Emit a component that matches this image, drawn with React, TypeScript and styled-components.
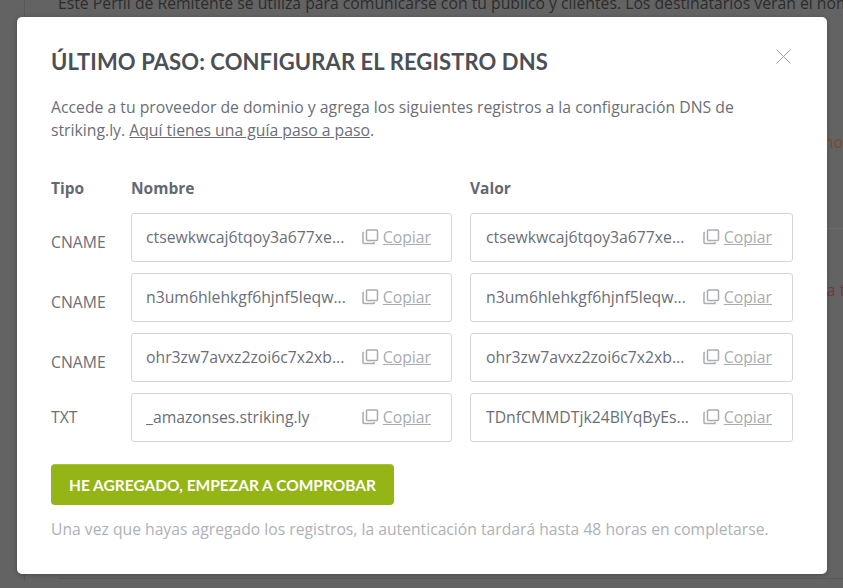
import styled, { createGlobalStyle } from "styled-components";

const GlobalStyle = createGlobalStyle`
  html, body {
    margin: 0;
    padding: 0;
    background: #636363;
  }
  * {
    box-sizing: border-box;
  }
`;

const records = [
  { type: "CNAME", name: "ctsewkwcaj6tqoy3a677xe...", value: "ctsewkwcaj6tqoy3a677xe..." },
  { type: "CNAME", name: "n3um6hlehkgf6hjnf5leqw...", value: "n3um6hlehkgf6hjnf5leqw..." },
  { type: "CNAME", name: "ohr3zw7avxz2zoi6c7x2xb...", value: "ohr3zw7avxz2zoi6c7x2xb..." },
  { type: "TXT", name: "_amazonses.striking.ly", value: "TDnfCMMDTjk24BlYqByEs..." },
];

const CopyIcon = () => (
  <svg width="17" height="16" viewBox="0 0 17 16" fill="none" stroke="#a9acb0">
    <rect x="4.5" y="1" width="11" height="10.5" rx="1" strokeWidth="1.5" />
    <path d="M2 3.5 H1.5 Q1 3.5 1 4 V13.5 Q1 14.5 2 14.5 H12 V13" strokeWidth="1.5" />
  </svg>
);

const CloseIcon = () => (
  <svg width="15" height="15" viewBox="0 0 15 15" fill="none" stroke="#9b9fa4" strokeWidth="1">
    <path d="M0.5 0.5 L14.5 14.5 M14.5 0.5 L0.5 14.5" />
  </svg>
);

const App = () => {
  return (
    <>
      <GlobalStyle />
      <Page>
        <Content>
          <Intro>
            Este Perfil de Remitente se utiliza para comunicarse con tu público y clientes. Los
            destinatarios verán el nombre
          </Intro>
          <OrangeNote>notificación</OrangeNote>
          <Divider />
          <RedNote>para todos</RedNote>
          <BottomDivider />
        </Content>
      </Page>
      <Modal>
        <Header>
          <Title>Último paso: Configurar el registro DNS</Title>
          <CloseButton>
            <CloseIcon />
          </CloseButton>
        </Header>
        <Description>
          Accede a tu proveedor de dominio y agrega los siguientes registros a la configuración DNS
          de striking.ly. <GuideLink>Aquí tienes una guía paso a paso</GuideLink>.
        </Description>
        <HeadRow>
          <TypeHead>Tipo</TypeHead>
          <ColumnHead $width={321}>Nombre</ColumnHead>
          <ColumnHead $width={323}>Valor</ColumnHead>
        </HeadRow>
        <Rows>
          {records.map((record) => (
            <Row key={record.name}>
              <TypeCell $low={record.type === "CNAME"}>{record.type}</TypeCell>
              <Field $width={321} $inset={14}>
                <FieldText>{record.name}</FieldText>
                <CopyIcon />
                <CopyLink>Copiar</CopyLink>
              </Field>
              <Field $width={323} $inset={15}>
                <FieldText>{record.value}</FieldText>
                <CopyIcon />
                <CopyLink>Copiar</CopyLink>
              </Field>
            </Row>
          ))}
        </Rows>
        <Submit>He agregado, empezar a comprobar</Submit>
        <Hint>
          Una vez que hayas agregado los registros, la autenticación tardará hasta 48 horas en
          completarse.
        </Hint>
      </Modal>
    </>
  );
};

export default App;

const Page = styled.div`
  height: 100vh;
  overflow: hidden;
  padding-left: 24px;
  background: #636363;
`;

const Content = styled.div`
  height: 100%;
  border-left: 1px solid #575757;
  padding-left: 33px;
  font-family: "Open Sans", sans-serif;
  font-size: 15.75px;
  line-height: 20px;
`;

const Intro = styled.div`
  margin-top: -7px;
  color: #2c2c2c;
  white-space: nowrap;
`;

const OrangeNote = styled.div`
  margin-top: 119px;
  margin-left: 766px;
  color: #7d4a26;
  white-space: nowrap;
`;

const Divider = styled.div`
  margin-top: 76px;
  height: 1px;
  background: #6d6d6d;
`;

const RedNote = styled.div`
  margin-top: 51px;
  margin-left: 744px;
  color: #723a3e;
  white-space: nowrap;
`;

const BottomDivider = styled.div`
  margin-top: 278px;
  height: 1px;
  background: #585858;
`;

const Modal = styled.div`
  position: absolute;
  top: 17px;
  left: 17px;
  width: 810px;
  height: 557px;
  padding: 31px 34px 0;
  background: #ffffff;
  border-radius: 5px;
  box-shadow: 0 1px 4px rgba(0, 0, 0, 0.25);
  font-family: "Open Sans", sans-serif;
`;

const Header = styled.div`
  display: flex;
  justify-content: space-between;
  align-items: flex-start;
`;

const Title = styled.h2`
  margin: 0;
  font-family: "Lato", sans-serif;
  font-size: 22px;
  line-height: 28px;
  font-weight: 700;
  letter-spacing: 0.1px;
  color: #4b5056;
  text-transform: uppercase;
`;

const CloseButton = styled.div`
  display: flex;
  margin: 1px 2px 0 0;
`;

const Description = styled.p`
  margin: 20px 0 0;
  font-size: 15.75px;
  line-height: 23px;
  color: #6a6f78;
`;

const GuideLink = styled.span`
  text-decoration: underline;
`;

const HeadRow = styled.div`
  display: flex;
  gap: 18px;
  margin-top: 36px;
`;

const TypeHead = styled.div`
  width: 62px;
  font-size: 15.5px;
  line-height: 20px;
  font-weight: 700;
  color: #636972;
`;

const ColumnHead = styled(TypeHead)<{ $width: number }>`
  width: ${(props) => props.$width}px;
`;

const Rows = styled.div`
  display: flex;
  flex-direction: column;
  gap: 11px;
  margin-top: 15px;
`;

const Row = styled.div`
  display: flex;
  gap: 18px;
`;

const TypeCell = styled.div<{ $low?: boolean }>`
  width: 62px;
  align-self: center;
  padding: ${(props) => (props.$low ? "9px 0 0" : "0 0 2px")};
  font-size: 15.75px;
  line-height: 20px;
  color: #6a6f78;
`;

const Field = styled.div<{ $width: number; $inset: number }>`
  display: flex;
  align-items: center;
  width: ${(props) => props.$width}px;
  height: 49px;
  padding: 0 20px 2px ${(props) => props.$inset}px;
  border: 1px solid #d4d5d8;
  border-radius: 3px;
  font-size: 15.75px;
`;

const FieldText = styled.span`
  flex: 1;
  color: #6a6f78;
  white-space: nowrap;
  overflow: hidden;
`;

const CopyLink = styled.span`
  margin-left: 4px;
  color: #a9acb0;
  text-decoration: underline;
`;

const Submit = styled.button`
  display: block;
  width: 343px;
  height: 41px;
  margin-top: 22px;
  padding: 0;
  border: none;
  border-top: 1px solid #a6c62c;
  border-radius: 4px;
  background: #95b517;
  color: #ffffff;
  font-family: "Lato", sans-serif;
  font-size: 15.5px;
  font-weight: 700;
  text-transform: uppercase;
`;

const Hint = styled.p`
  margin: 14px 0 0;
  font-size: 15.7px;
  line-height: 20px;
  color: #aeb1b5;
`;
